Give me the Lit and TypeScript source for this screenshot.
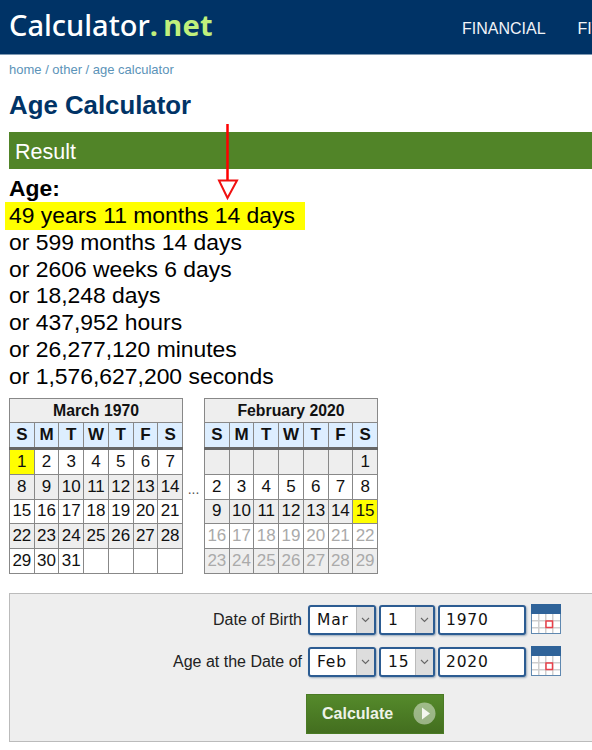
import { LitElement, html, css } from "lit";
import { customElement } from "lit/decorators.js";

type Cell = { t?: string; hl?: boolean; dim?: boolean };

const calIcon = html`<svg class="calicon" width="30" height="30" viewBox="0 0 30 30">
  <rect x="0.5" y="0.5" width="29" height="29" fill="#fff" stroke="#5f88b0"/>
  <rect x="0" y="0" width="30" height="10" fill="#2f6399"/>
  <g fill="#cfcfcf">
    <rect x="1" y="16" width="28" height="1.500"/><rect x="1" y="23" width="28" height="1.500"/>
    <rect x="7" y="10" width="1.500" height="19"/><rect x="14" y="10" width="1.500" height="19"/>
    <rect x="21" y="10" width="1.500" height="19"/>
  </g>
  <rect x="15" y="17" width="6.500" height="6.500" fill="#fff" stroke="#e8404a" stroke-width="1.500"/>
</svg>`;

const chevron = html`<svg width="9" height="6" viewBox="0 0 9 6"><path d="M1 1l3.5 3.5L8 1" fill="none" stroke="#666" stroke-width="1.1"/></svg>`;

@customElement("app-root")
export class AppRoot extends LitElement {
  static styles = css`
    :host { display: block; width: 592px; height: 750px; overflow: hidden; background: #fff; font-family: "Liberation Sans", Arial, sans-serif; color: #000; }
    .header { height: 55px; width: 720px; box-sizing: border-box; background: #003366; border-bottom: 1px solid #7f99b2; display: flex; align-items: center; padding-left: 9px; }
    .logo { width: 453px; padding-bottom: 6px; font-family: "Noto Sans", sans-serif; font-size: 29px; font-weight: 500; color: #fff; letter-spacing: 0; white-space: nowrap; }
    .logo b { color: #c0f07c; font-weight: 700; letter-spacing: 0.3px; }
    .logo .dot { margin-right: 5px; }
    .nav { display: flex; gap: 32px; color: #f0f4f8; font-size: 16px; padding-top: 3px; }
    .main { width: 720px; box-sizing: border-box; padding-left: 9px; position: relative; }
    .crumbs { font-size: 13px; line-height: 14px; padding-top: 8px; color: #5b93b8; }
    h1 { margin: 14px 0 0; font-size: 25.8px; line-height: 29px; font-weight: 700; color: #003366; }
    .bar { margin-top: 12px; height: 37px; background: #518428; color: #fff; font-size: 21.5px; line-height: 40px; padding-left: 6px; }
    .res { margin-top: 6px; margin-bottom: 1px; font-size: 22.9px; line-height: 26.85px; }
    .res b { display: block; }
    .hl { display: block; width: fit-content; background: #ffff00; box-shadow: 0 1px 0 #ffff00; margin-left: -4px; padding: 0 10px 0 4px; }
    .res div { white-space: nowrap; }
    .arrow { position: absolute; left: 208px; top: 69px; }
    .cals { display: flex; align-items: center; margin-top: 8px; }
    .dots { width: 21px; text-align: center; font-size: 14px; color: #555; padding-top: 6px; }
    table { border-collapse: collapse; table-layout: fixed; width: 174px; font-size: 17px; line-height: 18px; }
    td, th { border: 1px solid #888; padding: 0; text-align: center; height: 23.7px; overflow: hidden; color: #111; }
    td.title { background: #eee; font-size: 15.8px; font-weight: 700; }
    .dow th { background: #ddeeff; font-size: 17px; border-bottom: 3px solid #666; }
    tr.odd td { background: #eee; }
    tr td.hl2, tr.odd td.hl2 { background: #ffff00; }
    td.dim { color: #aaa; }
    .form { margin-top: 19px; height: 149px; box-sizing: border-box; border: 1px solid #bbb; border-right: 0; background: #eee; display: flex; flex-direction: column; padding: 11px 0 0 0; }
    .row { display: flex; align-items: center; height: 30px; margin-bottom: 12px; }
    .lbl { width: 292px; text-align: right; font-size: 16px; color: #222; margin-right: 6px; white-space: nowrap; }
    .sel, .inp { box-sizing: border-box; height: 30px; background: #fff; border: 2px solid #2c5c92; border-radius: 3px; box-shadow: 1px 1px 2px #9ab; display: flex; align-items: center; font-family: "DejaVu Sans", sans-serif; font-size: 15.500px; letter-spacing: 0.8px; color: #111; margin-right: 3px; }
    .sel span { flex: 1; padding-left: 7px; }
    .sel i { width: 17px; align-self: stretch; background: #ddd; border-left: 1px solid #bbb; display: flex; align-items: center; justify-content: center; }
    .m { width: 68px; } .d { width: 56px; } .inp { width: 88px; padding-left: 6px; margin-right: 5px; }
    .calicon { display: block; margin-top: -2px; }
    .btnrow { padding: 5px 0 0 296px; }
    .btn { box-sizing: border-box; width: 138px; height: 40px; background: linear-gradient(#558a2b, #436e1f); border: 1px solid #4a7a24; display: flex; align-items: center; padding-left: 15px; color: #eef3e8; font-weight: 700; font-size: 16px; }
    .btn span { width: 91px; }
  `;

  private cal(title: string, rows: Cell[][], shadedFirst: boolean) {
    return html`<table>
      <tr><td class="title" colspan="7">${title}</td></tr>
      <tr class="dow">${["S", "M", "T", "W", "T", "F", "S"].map((d) => html`<th>${d}</th>`)}</tr>
      ${rows.map((r, i) => html`<tr class=${(i % 2 === 0) === shadedFirst ? "odd" : ""}>${r.map((c) => html`<td class="${c.hl ? "hl2" : ""} ${c.dim ? "dim" : ""}">${c.t ?? ""}</td>`)}</tr>`)}
    </table>`;
  }

  private range(a: number, b: number, o: Partial<Cell> = {}): Cell[] {
    const r: Cell[] = [];
    for (let i = a; i <= b; i++) r.push({ t: String(i), ...o });
    return r;
  }

  render() {
    const march: Cell[][] = [
      [{ t: "1", hl: true }, ...this.range(2, 7)],
      this.range(8, 14),
      this.range(15, 21),
      this.range(22, 28),
      [...this.range(29, 31), {}, {}, {}, {}],
    ];
    const feb: Cell[][] = [
      [{}, {}, {}, {}, {}, {}, { t: "1" }],
      this.range(2, 8),
      [...this.range(9, 14), { t: "15", hl: true }],
      this.range(16, 22, { dim: true }),
      this.range(23, 29, { dim: true }),
    ];
    return html`
      <div class="header">
        <div class="logo">Calculator<b><span class="dot">.</span>net</b></div>
        <div class="nav"><span>FINANCIAL</span><span>FITNESS</span></div>
      </div>
      <div class="main">
        <div class="crumbs">home / other / age calculator</div>
        <h1>Age Calculator</h1>
        <div class="bar">Result</div>
        <div class="res">
          <b>Age:</b>
          <span class="hl">49 years 11 months 14 days</span>
          <div>or 599 months 14 days</div>
          <div>or 2606 weeks 6 days</div>
          <div>or 18,248 days</div>
          <div>or 437,952 hours</div>
          <div>or 26,277,120 minutes</div>
          <div>or 1,576,627,200 seconds</div>
        </div>
        <svg class="arrow" width="40" height="80" viewBox="0 0 40 80">
          <path d="M19.500 0V56" stroke="#ff0000" stroke-width="2.500" fill="none"/>
          <path d="M11 56.500H29L19.500 74Z" stroke="#f01010" stroke-width="2" fill="none"/>
        </svg>
        <div class="cals">
          ${this.cal("March 1970", march, false)}
          <div class="dots">...</div>
          ${this.cal("February 2020", feb, true)}
        </div>
        <div class="form">
          <div class="row">
            <div class="lbl">Date of Birth</div>
            <div class="sel m"><span>Mar</span><i>${chevron}</i></div>
            <div class="sel d"><span>1</span><i>${chevron}</i></div>
            <div class="inp">1970</div>
            ${calIcon}
          </div>
          <div class="row">
            <div class="lbl">Age at the Date of</div>
            <div class="sel m"><span>Feb</span><i>${chevron}</i></div>
            <div class="sel d"><span>15</span><i>${chevron}</i></div>
            <div class="inp">2020</div>
            ${calIcon}
          </div>
          <div class="btnrow">
            <div class="btn"><span>Calculate</span>
              <svg width="23" height="23" viewBox="0 0 23 23"><circle cx="11.500" cy="11.500" r="11" fill="#fff" fill-opacity="0.45"/><path d="M9 5.500L17 11.500L9 17.500Z" fill="#f4f7f0"/></svg>
            </div>
          </div>
        </div>
      </div>
    `;
  }
}
